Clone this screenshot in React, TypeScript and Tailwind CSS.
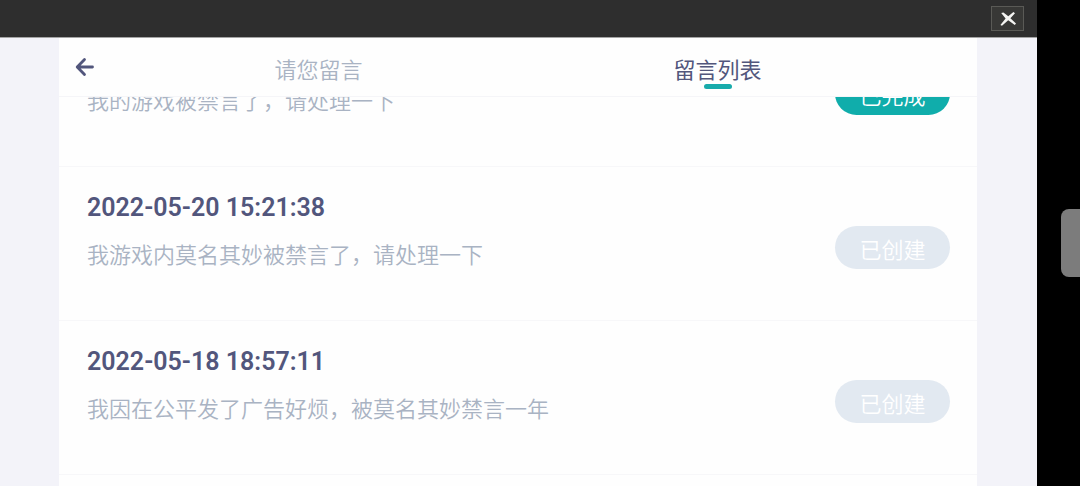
import React, { useState } from 'react';

type Status = 'done' | 'created';

interface MessageItem {
  id: number;
  time?: string;
  content: string;
  status: Status;
}

const messages: MessageItem[] = [
  { id: 1, content: '我的游戏被禁言了，请处理一下', status: 'done' },
  { id: 2, time: '2022-05-20 15:21:38', content: '我游戏内莫名其妙被禁言了，请处理一下', status: 'created' },
  { id: 3, time: '2022-05-18 18:57:11', content: '我因在公平发了广告好烦，被莫名其妙禁言一年', status: 'created' },
];

const tabs = ['请您留言', '留言列表'];

const TopBar: React.FC = () => (
  <div className="flex h-[38px] shrink-0 items-center justify-end border-b border-[#a4a4a4] bg-[#2e2e2e] pr-[13px]">
    <button
      className="flex h-[25px] w-[33px] items-center justify-center border border-[#5a5a56] bg-[#383836]"
      aria-label="关闭"
    >
      <svg className="h-4 w-5" viewBox="0 0 20 16" fill="none">
        <path d="M3.2 2 5.4 1.4 10.3 5.2 15.4 1 17 2.2 12.4 7.2 18 12.6 16.8 14 10.2 9.3 4 14.8 2.4 14 7.6 7.4Z" fill="#f4f4f2" />
      </svg>
    </button>
  </div>
);

const MessageRow: React.FC<{ item: MessageItem }> = ({ item }) => (
  <li className="flex h-[154px] shrink-0 justify-between border-b border-[#f7f7f9] pl-7 pr-[27px]">
    <div className="min-w-0 pt-[25px]">
      <div className="h-8 text-[25px] leading-8 font-semibold text-[#52567c]">{item.time}</div>
      <p className="mt-4 truncate text-[22px] leading-8 font-[350] text-[#a9b3c3]">{item.content}</p>
    </div>
    <span
      className={`mt-[59px] flex h-[43px] w-[115px] shrink-0 items-center justify-center rounded-full pt-[6px] text-[22px] leading-8 font-[350] text-white ${
        item.status === 'done' ? 'bg-[#10adab]' : 'bg-[#e2e9f1]'
      }`}
    >
      {item.status === 'done' ? '已完成' : '已创建'}
    </span>
  </li>
);

const App: React.FC = () => {
  const [activeTab, setActiveTab] = useState(1);

  return (
    <div className="flex h-screen overflow-hidden bg-black font-['Roboto','Noto_Sans_CJK_SC',sans-serif]">
      <div className="flex min-w-0 flex-1 flex-col bg-[#f3f3f9]">
        <TopBar />
        <main className="mr-15 ml-[59px] flex min-h-0 flex-1 flex-col bg-[#fefefe]">
          <header className="grid h-[59px] shrink-0 grid-cols-[60px_1fr_1fr_60px] border-b border-[#f5f5f8]">
            <button className="flex items-center pl-4" aria-label="返回">
              <svg className="h-5 w-5" viewBox="0 0 20 20" fill="none" stroke="#52567c" strokeWidth={2.8} strokeLinecap="round" strokeLinejoin="round">
                <path d="M17.5 10H2.5M9.5 2.5 2.2 10l7.3 7.5" />
              </svg>
            </button>
            {tabs.map((tab, index) => (
              <button
                key={tab}
                className={`relative flex items-center justify-center pt-2 text-[22px] leading-8 ${
                  activeTab === index ? 'text-[#52567c]' : 'font-[350] text-[#a9b3c3]'
                }`}
                onClick={() => setActiveTab(index)}
              >
                {tab}
                {activeTab === index && (
                  <span className="absolute bottom-[7px] h-[5px] w-7 rounded-full bg-[#18abab]" />
                )}
              </button>
            ))}
          </header>
          <div className="min-h-0 flex-1 overflow-hidden">
            {/* the list is scrolled part way into its first row */}
            <ul className="-mt-21 flex flex-col">
              {messages.map((item) => (
                <MessageRow key={item.id} item={item} />
              ))}
            </ul>
          </div>
        </main>
      </div>
      <aside className="flex w-[43px] shrink-0 items-center justify-end">
        <div className="h-17 w-[19px] rounded-l-lg bg-[#7c7c7c]" />
      </aside>
    </div>
  );
};

export default App;
